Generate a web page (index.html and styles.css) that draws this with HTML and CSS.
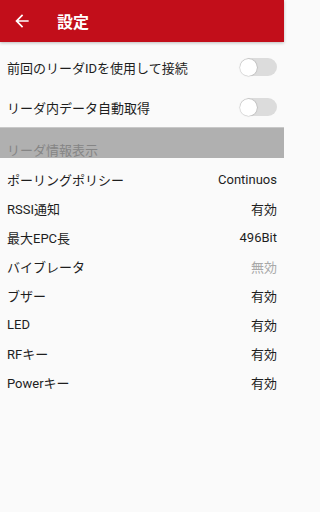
FILE: index.html
```html
<!DOCTYPE html>
<html lang="ja">
<head>
<meta charset="utf-8">
<link rel="stylesheet" href="styles.css">
</head>
<body>
<div class="app">
  <header class="bar">
    <svg class="back" viewBox="0 0 24 24" width="20" height="20"><path d="M20 11H7.83l5.59-5.59L12 4l-8 8 8 8 1.41-1.41L7.83 13H20v-2z" fill="#fff"/></svg>
    <h1 class="title">設定</h1>
  </header>
  <div class="toggles">
    <div class="trow"><span>前回のリーダIDを使用して接続</span><span class="switch"><span class="thumb"></span></span></div>
    <div class="trow"><span>リーダ内データ自動取得</span><span class="switch"><span class="thumb"></span></span></div>
  </div>
  <div class="section">リーダ情報表示</div>
  <div class="list">
    <div class="row"><span>ポーリングポリシー</span><span>Continuos</span></div>
    <div class="row"><span>RSSI通知</span><span>有効</span></div>
    <div class="row"><span>最大EPC長</span><span>496Bit</span></div>
    <div class="row"><span>バイブレータ</span><span class="off">無効</span></div>
    <div class="row"><span>ブザー</span><span>有効</span></div>
    <div class="row"><span>LED</span><span>有効</span></div>
    <div class="row"><span>RFキー</span><span>有効</span></div>
    <div class="row"><span>Powerキー</span><span>有効</span></div>
  </div>
</div>
</body>
</html>
```
FILE: styles.css
```css
html, body { margin: 0; padding: 0; }
body {
  background: #fafafa;
  font-family: Roboto, "Noto Sans CJK JP", sans-serif;
  color: #1e1e1e;
  font-size: 13px;
}
.app { width: 284px; height: 512px; background: #fafafa; }
.bar {
  height: 42px;
  background: #c20e1a;
  display: flex;
  align-items: center;
  box-shadow: 0 1px 3px rgba(0,0,0,0.25);
}
.back { margin-left: 12px; flex: none; }
.title {
  margin: 0 0 0 25px;
  font-size: 16px;
  font-weight: bold;
  color: #fff;
  font-family: "Noto Sans CJK JP", sans-serif;
}
.toggles { padding-top: 5px; }
.trow {
  height: 40px;
  display: flex;
  align-items: center;
  justify-content: space-between;
  padding: 0 7px;
}
.switch {
  width: 37px;
  height: 18px;
  border-radius: 9px;
  background: #dcdcdc;
  display: flex;
  align-items: center;
}
.thumb {
  width: 17px;
  height: 17px;
  border-radius: 50%;
  background: #fff;
  box-shadow: 0 0 1px 0.5px rgba(0,0,0,0.22);
  margin-left: 0;
}
.section {
  height: 31px;
  background: #b0b0b0;
  border-top: 1px solid #c8c8c8;
  color: #858585;
  padding: 0 7px;
  display: flex;
  align-items: flex-end;
  line-height: 15px;
  padding-bottom: 0;
  box-sizing: border-box;
}
.list { padding-top: 7px; }
.row {
  height: 29px;
  display: flex;
  align-items: center;
  justify-content: space-between;
  padding: 0 7px;
}
.off { color: #a8a8a8; }
```
